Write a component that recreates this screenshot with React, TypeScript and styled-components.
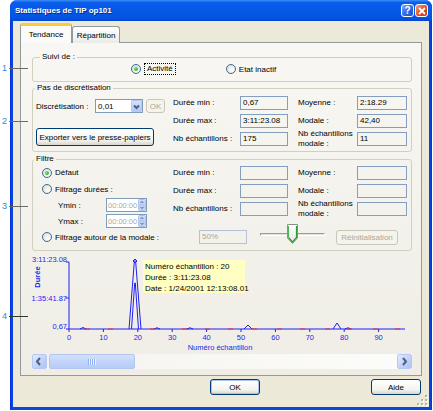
import styled, { createGlobalStyle } from 'styled-components';

const GlobalStyle = createGlobalStyle`
  html, body { margin: 0; padding: 0; background: #fff; }
  body {
    font-family: 'Liberation Sans', Arial, sans-serif;
    font-size: 8px;
    color: #000;
  }
  * { box-sizing: border-box; }
`;

const BLUE = '#1f1ff0';
const RED = '#ff2a2a';

const Page = styled.div`
  position: relative;
  width: 433px;
  height: 411px;
  padding-left: 10px;
  background: #fff;
`;

const Callout = styled.div<{ $top: number; $dark?: boolean }>`
  position: absolute;
  left: 2px;
  top: ${(p) => p.$top - 5}px;
  height: 10px;
  display: flex;
  align-items: center;
  z-index: 5;
  color: #1e8ce6;
  font-size: 9px;

  &::after {
    content: '';
    width: 19px;
    height: 1px;
    margin-left: 2px;
    background: ${(p) => (p.$dark ? '#333' : '#6b6b6b')};
  }
`;

const Window = styled.div`
  position: relative;
  width: 422px;
  height: 410px;
  display: flex;
  flex-direction: column;
  padding: 0 3px 3px;
  border-radius: 7px 7px 0 0;
  background: linear-gradient(to right, #0831d9, #0b45de 2px, #0b45de calc(100% - 2px), #0831d9);
  overflow: hidden;
`;

const TitleBar = styled.div`
  height: 21px;
  margin: 0 -3px;
  padding: 0 4px 0 5px;
  display: flex;
  align-items: center;
  gap: 1px;
  background: linear-gradient(180deg, #3d8ff7 0%, #0a5ceb 12%, #0558e6 50%, #0453e2 85%, #0347cf 100%);
  color: #fff;
  font-weight: bold;
  font-size: 8px;
  text-shadow: 1px 1px 0 #0a2a8a;

  span {
    flex: 1;
  }
`;

const TitleButton = styled.div<{ $variant: 'help' | 'close' }>`
  width: 13px;
  height: 13px;
  border: 1px solid #fff;
  border-radius: 3px;
  display: flex;
  align-items: center;
  justify-content: center;
  font-size: 10px;
  font-weight: bold;
  text-shadow: none;
  background: ${(p) =>
    p.$variant === 'help'
      ? 'linear-gradient(135deg, #7aa4fa, #2a64e4 60%, #1d50cc)'
      : 'linear-gradient(135deg, #f0a080, #dd4a1e 60%, #c23a12)'};
`;

const ClientArea = styled.div`
  flex: 1;
  display: flex;
  flex-direction: column;
  background: #ece9d8;
  padding: 2px 7px 0;
`;

const Tabs = styled.div`
  display: flex;
  align-items: flex-end;
  height: 20px;
  position: relative;
  z-index: 1;
`;

const Tab = styled.div<{ $active?: boolean }>`
  width: ${(p) => (p.$active ? 52 : 48)}px;
  height: ${(p) => (p.$active ? 20 : 17)}px;
  display: flex;
  align-items: center;
  justify-content: center;
  border: 1px solid #919b9c;
  border-bottom: none;
  border-radius: 3px 3px 0 0;
  background: ${(p) => (p.$active ? '#fafaf8' : 'linear-gradient(#ffffff, #ecebe6)')};
  border-top: ${(p) => (p.$active ? '3px solid #ffc83c' : '1px solid #919b9c')};
  padding-bottom: ${(p) => (p.$active ? 1 : 0)}px;
`;

const Panel = styled.div`
  width: 402px;
  height: 334px;
  margin-top: -1px;
  border: 1px solid #919b9c;
  background: linear-gradient(#f8f7f3, #efede5);
  padding: 9px 9px 6px 11px;
  display: flex;
  flex-direction: column;
`;

const Group = styled.fieldset<{ $gap?: number }>`
  margin: ${(p) => p.$gap ?? 0}px 0 0;
  padding: 0;
  border: 1px solid #d0d0bf;
  border-radius: 3px;
  min-width: 0;
`;

const GroupTitle = styled.legend<{ $indent: number }>`
  margin-left: ${(p) => p.$indent}px;
  padding: 0 2px;
  height: 10px;
  line-height: 10px;
`;

const SuiviRow = styled.div`
  height: 14px;
  margin-bottom: 5px;
  padding-left: 98px;
  display: flex;
  align-items: center;
  gap: 50px;
`;

const Option = styled.label`
  display: flex;
  align-items: center;
  gap: 3px;
  white-space: nowrap;
`;

const Radio = styled.span<{ $checked?: boolean }>`
  width: 10px;
  height: 10px;
  border-radius: 50%;
  border: 1px solid #3a6a94;
  background: radial-gradient(circle at 65% 65%, #fff, #dcd9cd);
  display: flex;
  align-items: center;
  justify-content: center;
  flex-shrink: 0;

  &::after {
    content: '';
    display: ${(p) => (p.$checked ? 'block' : 'none')};
    width: 4px;
    height: 4px;
    border-radius: 50%;
    background: radial-gradient(circle at 35% 35%, #7be07b, #1c9a1c);
  }
`;

const Focus = styled.span`
  border: 1px dotted #000;
  padding: 0 2px;
  line-height: 10px;
`;

const PasBody = styled.div`
  display: flex;
  padding: 1px 0 3px 3px;
`;

const LeftBlock = styled.div`
  width: 137px;
  display: flex;
  flex-direction: column;
  align-items: flex-start;
  padding-top: 5px;
  gap: 15px;
`;

const InlineRow = styled.div<{ $height?: number; $indent?: number }>`
  display: flex;
  align-items: center;
  height: ${(p) => p.$height ?? 14}px;
  padding-left: ${(p) => p.$indent ?? 0}px;
  white-space: nowrap;
`;

const FieldLabel = styled.span<{ $w: number }>`
  width: ${(p) => p.$w}px;
  flex-shrink: 0;
`;

const Combo = styled.div`
  width: 48px;
  height: 14px;
  border: 1px solid #7f9db9;
  background: #fff;
  display: flex;
  align-items: center;
  padding-left: 2px;
  justify-content: space-between;
`;

const ComboArrow = styled.span`
  width: 11px;
  height: 12px;
  border: 1px solid #b6c9f6;
  border-radius: 1px;
  background: linear-gradient(#d4e0fd, #b2c7f7);
  display: flex;
  align-items: center;
  justify-content: center;
`;

const Button = styled.div<{ $w: number; $h: number; $disabled?: boolean; $default?: boolean }>`
  width: ${(p) => p.$w}px;
  height: ${(p) => p.$h}px;
  display: flex;
  align-items: center;
  justify-content: center;
  flex-shrink: 0;
  border: 1px solid ${(p) => (p.$disabled ? '#c9c7ba' : '#003c74')};
  border-radius: 3px;
  color: ${(p) => (p.$disabled ? '#aca899' : '#000')};
  background: ${(p) =>
    p.$disabled ? '#f5f4ea' : 'linear-gradient(#ffffff, #f3f3ef 70%, #d9d5ca)'};
  box-shadow: ${(p) => (p.$default ? 'inset 0 0 0 1px #a8c3ef' : 'none')};
  white-space: nowrap;
`;

const StatsGrid = styled.div`
  display: grid;
  grid-template-columns: 67px 58px 59px 50px;
  grid-auto-rows: 18px;
  align-items: center;
`;

const StatLabel = styled.span`
  line-height: 10px;
`;

const ReadBox = styled.div<{ $w?: number; $muted?: boolean }>`
  width: ${(p) => p.$w ?? 48}px;
  height: 14px;
  border: 1px solid ${(p) => (p.$muted ? '#b7c3d3' : '#839fbd')};
  padding-left: 2px;
  line-height: 12px;
  color: ${(p) => (p.$muted ? '#aca899' : '#000')};
  white-space: nowrap;
`;

const FiltreBody = styled.div`
  padding-bottom: 5px;
`;

const FiltreTop = styled.div`
  display: flex;
`;

const FiltreLeft = styled.div`
  width: 140px;
  padding-left: 9px;
  display: flex;
  flex-direction: column;
`;

const Spin = styled.div`
  width: 41px;
  height: 14px;
  border: 1px solid #7f9db9;
  background: #fff;
  display: flex;
  align-items: center;
  overflow: hidden;
  color: #aca899;
  font-size: 7.5px;

  span {
    flex: 1;
    padding-left: 1px;
    overflow: hidden;
  }
`;

const SliderBox = styled.div`
  position: relative;
  width: 65px;
  height: 20px;
  margin: -6px 0 0 13px;
  display: flex;
  align-items: center;
`;

const SliderTrack = styled.div`
  width: 100%;
  height: 3px;
  border-top: 1px solid #9d9c99;
  border-left: 1px solid #9d9c99;
  border-bottom: 1px solid #fff;
  border-right: 1px solid #fff;
  background: #e3e1d8;
`;

const SliderThumb = styled.svg`
  position: absolute;
  left: 27px;
  top: 0;
`;

const ChartArea = styled.div`
  position: relative;
  height: 102px;
`;

const Tooltip = styled.div`
  position: absolute;
  left: 111px;
  top: 9px;
  width: 102px;
  height: 33px;
  padding: 1px 2px;
  background: #ffffc4;
  line-height: 11px;
  white-space: nowrap;
`;

const ScrollBar = styled.div`
  margin-top: 1px;
  height: 15px;
  width: 380px;
  display: flex;
  background: linear-gradient(to right, #f4f3ee, #fcfcfa);
`;

const ScrollButton = styled.div<{ $end?: boolean }>`
  width: 15px;
  height: 15px;
  margin-left: ${(p) => (p.$end ? 'auto' : '0')};
  border: 1px solid #b5c9f5;
  border-radius: 2px;
  background: linear-gradient(135deg, #e3ebfe, #bfd0f8 60%, #aec3f5);
  display: flex;
  align-items: center;
  justify-content: center;
`;

const ScrollThumb = styled.div`
  width: 86px;
  height: 15px;
  margin-left: 2px;
  border: 1px solid #b3c6f2;
  border-radius: 2px;
  background: linear-gradient(#d4e1fc, #c2d4fb 50%, #b6cbf8);
  display: flex;
  align-items: center;
  justify-content: center;

  &::after {
    content: '';
    width: 8px;
    height: 6px;
    background: repeating-linear-gradient(to right, #8fb0f1 0 1px, #eef3fe 1px 2px);
  }
`;

const Footer = styled.div`
  display: flex;
  margin-top: 3px;
  padding: 0 1px 0 190px;
`;

const Spacer = styled.div`
  flex: 1;
`;

const Grip = styled.svg`
  position: absolute;
  right: 4px;
  bottom: 4px;
`;

function StatsBlock({ values }: { values?: string[] }) {
  const v = values ?? ['', '', '', '', '', ''];
  return (
    <StatsGrid>
      <StatLabel>Durée min :</StatLabel>
      <ReadBox>{v[0]}</ReadBox>
      <StatLabel>Moyenne :</StatLabel>
      <ReadBox $w={50}>{v[1]}</ReadBox>
      <StatLabel>Durée max :</StatLabel>
      <ReadBox>{v[2]}</ReadBox>
      <StatLabel>Modale :</StatLabel>
      <ReadBox $w={50}>{v[3]}</ReadBox>
      <StatLabel>Nb échantillons :</StatLabel>
      <ReadBox>{v[4]}</ReadBox>
      <StatLabel>
        Nb échantillons
        <br />
        modale :
      </StatLabel>
      <ReadBox $w={50}>{v[5]}</ReadBox>
    </StatsGrid>
  );
}

function SpinArrows() {
  return (
    <svg width="8" height="12" viewBox="0 0 8 12">
      <rect x="0.5" y="0.5" width="7" height="5.5" rx="1" fill="#c9d8fb" stroke="#a9bfef" />
      <rect x="0.5" y="6" width="7" height="5.5" rx="1" fill="#c1d2f9" stroke="#a9bfef" />
      <path d="M2.5 4 L4 2.5 L5.5 4" fill="none" stroke="#4d6185" />
      <path d="M2.5 8 L4 9.5 L5.5 8" fill="none" stroke="#4d6185" />
    </svg>
  );
}

function Chevron({ dir }: { dir: 'left' | 'right' | 'down' }) {
  const d = dir === 'left' ? 'M6 2 L3 5.5 L6 9' : dir === 'right' ? 'M4 2 L7 5.5 L4 9' : 'M2 3.5 L4.5 6 L7 3.5';
  const size = dir === 'down' ? 9 : 11;
  return (
    <svg width={size} height={size} viewBox={`0 0 ${size} ${size}`}>
      <path d={d} fill="none" stroke="#4d6185" strokeWidth="2" />
    </svg>
  );
}

const xOf = (v: number) => 37 + v * 3.44;
const redSegments = [53, 76, 118, 150, 173, 196, 220, 245, 268, 293, 315, 341, 363];

function Chart() {
  const ticks = [0, 10, 20, 30, 40, 50, 60, 70, 80, 90];
  return (
    <svg width="380" height="102" viewBox="0 0 380 102" fontFamily="'Liberation Sans', Arial, sans-serif">
      <g fill={BLUE} fontSize="7.5">
        <text x="35" y="11" textAnchor="end">3:11:23.08</text>
        <text x="35" y="50" textAnchor="end">1:35:41.87</text>
        <text x="35" y="78" textAnchor="end">0,67</text>
        <text transform="translate(8,26) rotate(-90)" textAnchor="middle" fontWeight="bold">Durée</text>
        {ticks.map((t) => (
          <text key={t} x={xOf(t)} y="89" textAnchor="middle">{t}</text>
        ))}
        <text x="188" y="99" textAnchor="middle">Numéro échantillon</text>
      </g>
      <g stroke={BLUE} strokeWidth="1" fill="none">
        <path d="M37 11 V78" />
        <path d="M34 11 H37 M34 47 H37 M34 78 H37" />
        <path d="M37 78 H373" />
        {ticks.map((t) => (
          <path key={t} d={`M${xOf(t)} 78 V81`} />
        ))}
        <path d="M97 78 L102.3 11 L103.7 11 L109 78" />
        <path d="M99.5 78 L102.7 32 L103.3 32 L106.5 78" />
        <path d="M101 10 L103 8 L105 10 L103 12 Z" />
        <path d="M48 78 Q51 75 54 78" />
        <path d="M122 78 Q125 75.5 128 78" />
        <path d="M155 78 Q158 75.5 161 78" />
        <path d="M212 78 L216 74 L220 78" />
        <path d="M301 78 L305 72 L309 78" />
        <path d="M313 78 Q316 75.5 319 78" />
      </g>
      <g stroke={RED} strokeWidth="1.2">
        {redSegments.map((x) => (
          <path key={x} d={`M${x} 78 H${x + 5}`} />
        ))}
      </g>
      <circle cx="103" cy="10" r="0.8" fill={BLUE} />
    </svg>
  );
}

export default function App() {
  return (
    <>
      <GlobalStyle />
      <Page>
        <Callout $top={68}>1</Callout>
        <Callout $top={121}>2</Callout>
        <Callout $top={206}>3</Callout>
        <Callout $top={316} $dark>4</Callout>
        <Window>
          <TitleBar>
            <span>Statistiques de TIP op101</span>
            <TitleButton $variant="help">?</TitleButton>
            <TitleButton $variant="close">
              <svg width="8" height="8" viewBox="0 0 8 8">
                <path d="M1 1 L7 7 M7 1 L1 7" stroke="#fff" strokeWidth="1.8" />
              </svg>
            </TitleButton>
          </TitleBar>
          <ClientArea>
            <Tabs>
              <Tab $active>Tendance</Tab>
              <Tab>Répartition</Tab>
            </Tabs>
            <Panel>
              <Group>
                <GroupTitle $indent={7}>Suivi de :</GroupTitle>
                <SuiviRow>
                  <Option>
                    <Radio $checked />
                    <Focus>Activité</Focus>
                  </Option>
                  <Option>
                    <Radio />
                    Etat inactif
                  </Option>
                </SuiviRow>
              </Group>

              <Group $gap={1}>
                <GroupTitle $indent={2}>Pas de discrétisation</GroupTitle>
                <PasBody>
                  <LeftBlock>
                    <InlineRow>
                      <FieldLabel $w={59}>Discrétisation :</FieldLabel>
                      <Combo>
                        0,01
                        <ComboArrow>
                          <Chevron dir="down" />
                        </ComboArrow>
                      </Combo>
                      <Button $w={19} $h={14} $disabled style={{ marginLeft: 3 }}>
                        OK
                      </Button>
                    </InlineRow>
                    <Button $w={118} $h={18}>
                      Exporter vers le presse-papiers
                    </Button>
                  </LeftBlock>
                  <StatsBlock values={['0,67', '2:18.29', '3:11:23.08', '42,40', '175', '11']} />
                </PasBody>
              </Group>

              <Group $gap={2}>
                <GroupTitle $indent={1}>Filtre</GroupTitle>
                <FiltreBody>
                  <FiltreTop>
                    <FiltreLeft>
                      <InlineRow $height={17}>
                        <Option>
                          <Radio $checked />
                          Défaut
                        </Option>
                      </InlineRow>
                      <InlineRow $height={16}>
                        <Option>
                          <Radio />
                          Filtrage durées :
                        </Option>
                      </InlineRow>
                      <InlineRow $height={16} $indent={16}>
                        <FieldLabel $w={48}>Ymin :</FieldLabel>
                        <Spin>
                          <span>00:00:00</span>
                          <SpinArrows />
                        </Spin>
                      </InlineRow>
                      <InlineRow $height={16} $indent={16}>
                        <FieldLabel $w={48}>Ymax :</FieldLabel>
                        <Spin>
                          <span>00:00:00</span>
                          <SpinArrows />
                        </Spin>
                      </InlineRow>
                    </FiltreLeft>
                    <StatsBlock />
                  </FiltreTop>
                  <InlineRow $height={16} $indent={9}>
                    <FieldLabel $w={157}>
                      <Option>
                        <Radio />
                        Filtrage autour de la modale :
                      </Option>
                    </FieldLabel>
                    <ReadBox $muted>50%</ReadBox>
                    <SliderBox>
                      <SliderTrack />
                      <SliderThumb width="11" height="20" viewBox="0 0 11 20">
                        <defs>
                          <linearGradient id="thumb" x1="0" y1="0" x2="0" y2="1">
                            <stop offset="0" stopColor="#ffffff" />
                            <stop offset="1" stopColor="#e6e5dc" />
                          </linearGradient>
                        </defs>
                        <path d="M0.5 0.5 H10.5 V14 L5.5 19.5 L0.5 14 Z" fill="url(#thumb)" stroke="#8f8e87" />
                        <path d="M1.5 13.5 L5.5 18 L9.5 13.5 V2" fill="none" stroke="#2a9a3a" strokeWidth="1.2" />
                        <path d="M1.5 2 V13.5" stroke="#4fb35a" />
                      </SliderThumb>
                    </SliderBox>
                    <Button $w={62} $h={15} $disabled style={{ marginLeft: 11 }}>
                      Réinitialisation
                    </Button>
                  </InlineRow>
                </FiltreBody>
              </Group>

              <ChartArea>
                <Chart />
                <Tooltip>
                  Numéro échantillon : 20
                  <br />
                  Durée : 3:11:23.08
                  <br />
                  Date : 1/24/2001 12:13:08.01
                </Tooltip>
              </ChartArea>

              <ScrollBar>
                <ScrollButton>
                  <Chevron dir="left" />
                </ScrollButton>
                <ScrollThumb />
                <ScrollButton $end>
                  <Chevron dir="right" />
                </ScrollButton>
              </ScrollBar>
            </Panel>
            <Footer>
              <Button $w={50} $h={16} $default>
                OK
              </Button>
              <Spacer />
              <Button $w={50} $h={16}>
                Aide
              </Button>
            </Footer>
          </ClientArea>
          <Grip width="12" height="12" viewBox="0 0 12 12">
            {[
              [10, 2],
              [10, 6],
              [6, 6],
              [10, 10],
              [6, 10],
              [2, 10],
            ].map(([x, y]) => (
              <g key={`${x}-${y}`}>
                <rect x={x} y={y} width="2" height="2" fill="#fff" />
                <rect x={x - 1} y={y - 1} width="2" height="2" fill="#b8b4a2" />
              </g>
            ))}
          </Grip>
        </Window>
      </Page>
    </>
  );
}
